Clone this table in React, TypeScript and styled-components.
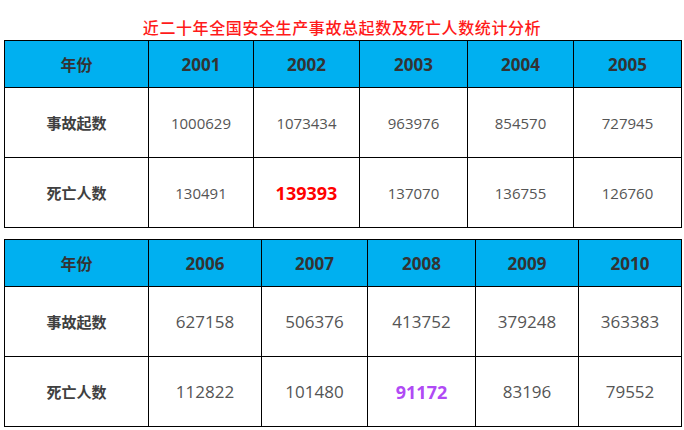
import React from "react";
import styled, { createGlobalStyle } from "styled-components";

const GlobalStyle = createGlobalStyle`
  html, body { margin: 0; padding: 0; background: #ffffff; }
  body { width: 684px; height: 430px; overflow: hidden; }
`;

const Page = styled.div`
  width: 684px;
  display: flex;
  flex-direction: column;
  align-items: flex-start;
`;

const Title = styled.h1`
  margin: 0;
  width: 684px;
  height: 40px;
  padding-top: 17px;
  box-sizing: border-box;
  text-align: center;
  font-family: "Noto Sans CJK SC", sans-serif;
  font-size: 16px;
  line-height: 20px;
  font-weight: 500;
  color: #ff1a1a;
  letter-spacing: 0.6px;
`;

const Table = styled.table<{ $gap?: number }>`
  margin-left: 4px;
  margin-top: ${(p) => p.$gap ?? 0}px;
  width: 677px;
  border-collapse: collapse;
  table-layout: fixed;
  border: 1px solid #000;
`;

const Col = styled.col<{ $w: number }>`
  width: ${(p) => p.$w}px;
`;

const HeadRow = styled.tr`
  height: 47px;
  background: #00b0f0;
`;

const BodyRow = styled.tr`
  height: 70px;
`;

const HeadCell = styled.th`
  border: 1px solid #000;
  padding: 0;
  text-align: center;
  vertical-align: middle;
  font-family: "Open Sans", "Noto Sans CJK SC", sans-serif;
  font-weight: 700;
  font-size: 17px;
  color: #333333;
`;

const LabelHead = styled(HeadCell)`
  font-family: "Noto Sans CJK SC", sans-serif;
  font-size: 16px;
  font-weight: 700;
`;

const Label = styled.td`
  border: 1px solid #000;
  padding: 0;
  text-align: center;
  vertical-align: middle;
  font-family: "Noto Sans CJK SC", sans-serif;
  font-weight: 700;
  font-size: 15px;
  color: #404040;
`;

const Num = styled.td<{ $size: number; $color?: string; $bold?: boolean }>`
  border: 1px solid #000;
  padding: 0;
  text-align: center;
  vertical-align: middle;
  font-family: "Open Sans", sans-serif;
  font-size: ${(p) => (p.$bold ? 18 : p.$size)}px;
  font-weight: ${(p) => (p.$bold ? 700 : 400)};
  color: ${(p) => p.$color ?? "#555555"};
`;

type Highlight = { index: number; color: string };

type Block = {
  widths: number[];
  years: string[];
  accidents: string[];
  deaths: string[];
  size: number;
  highlight: Highlight;
  gap: number;
};

const blocks: Block[] = [
  {
    widths: [144, 105, 106, 108, 106, 108],
    years: ["2001", "2002", "2003", "2004", "2005"],
    accidents: ["1000629", "1073434", "963976", "854570", "727945"],
    deaths: ["130491", "139393", "137070", "136755", "126760"],
    size: 15,
    highlight: { index: 1, color: "#ff0000" },
    gap: 0,
  },
  {
    widths: [144, 113, 106, 108, 103, 103],
    years: ["2006", "2007", "2008", "2009", "2010"],
    accidents: ["627158", "506376", "413752", "379248", "363383"],
    deaths: ["112822", "101480", "91172", "83196", "79552"],
    size: 17,
    highlight: { index: 2, color: "#b04af5" },
    gap: 11,
  },
];

function DataTable({ block }: { block: Block }) {
  return (
    <Table $gap={block.gap}>
      <colgroup>
        {block.widths.map((w, i) => (
          <Col key={i} $w={w} />
        ))}
      </colgroup>
      <tbody>
        <HeadRow>
          <LabelHead>年份</LabelHead>
          {block.years.map((y) => (
            <HeadCell key={y}>{y}</HeadCell>
          ))}
        </HeadRow>
        <BodyRow>
          <Label>事故起数</Label>
          {block.accidents.map((v, i) => (
            <Num key={i} $size={block.size}>
              {v}
            </Num>
          ))}
        </BodyRow>
        <BodyRow>
          <Label>死亡人数</Label>
          {block.deaths.map((v, i) => {
            const hl = i === block.highlight.index;
            return (
              <Num
                key={i}
                $size={block.size}
                $bold={hl}
                $color={hl ? block.highlight.color : undefined}
              >
                {v}
              </Num>
            );
          })}
        </BodyRow>
      </tbody>
    </Table>
  );
}

export default function App() {
  return (
    <Page>
      <GlobalStyle />
      <Title>近二十年全国安全生产事故总起数及死亡人数统计分析</Title>
      {blocks.map((b, i) => (
        <DataTable key={i} block={b} />
      ))}
    </Page>
  );
}
